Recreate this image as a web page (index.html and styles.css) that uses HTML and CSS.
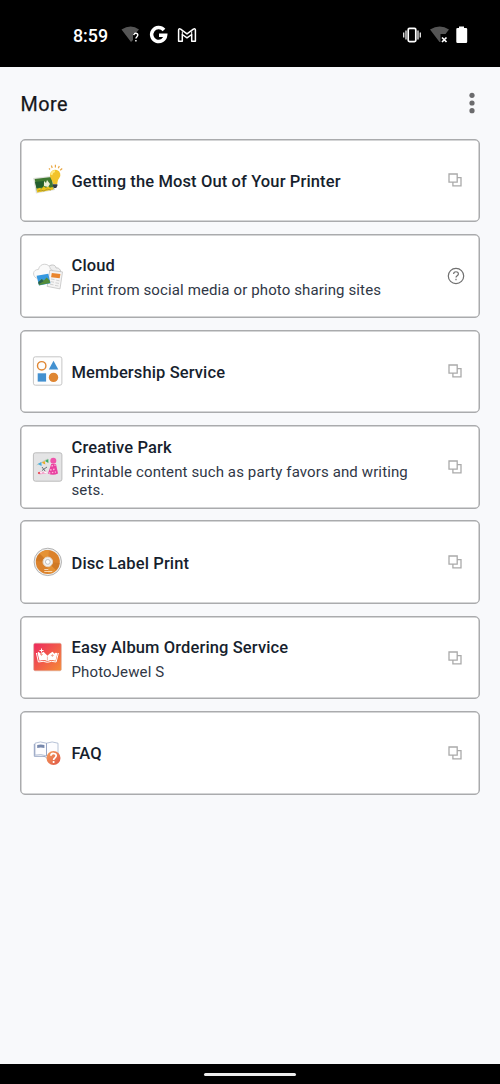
FILE: index.html
```html
<!DOCTYPE html>
<html lang="en">
<head>
<meta charset="utf-8">
<title>More</title>
<link rel="stylesheet" href="styles.css">
</head>
<body>
<svg class="defs" width="0" height="0">
  <symbol id="external" viewBox="0 0 14 14"><path d="M9.5 4.7H13v8.2H4.9V9.4M1 1h8.2v8.2H1z" fill="none" stroke="#aaa" stroke-width="1.3"/></symbol>
</svg>
<header class="status">
  <span class="clock">8:59</span>
  <svg class="status-left" width="80" height="24" viewBox="0 0 80 24">
    <path d="M1.5 5.5Q11-.5 19 5.5L16 9h-3v7l-2 2z" fill="#555"/>
    <path d="M13.8 11.1q.1-1.9 2-1.9 2 0 2 1.8c0 1.5-1.9 1.8-1.9 3.5m0 1.5v1.5" fill="none" stroke="#fff" stroke-width="1.4"/>
    <path d="M44 6A7 7 0 1 0 45.6 11.3H39" fill="none" stroke="#fff" stroke-width="3.5"/>
    <path d="M58.6 17.3V6q0-1.8 2-.8l6.4 4.7 6.4-4.7q2-1 2 .8v11.3h-3.7v-6.8L67 13.8l-4.7-3.3v6.8z" fill="none" stroke="#fff" stroke-width="1.5" stroke-linejoin="round"/>
    <path d="M62.3 10.5V7.4M71.7 10.5V7.4" stroke="#fff"/>
  </svg>
  <svg class="status-right" width="66" height="24" viewBox="0 0 66 24">
    <path d="M6.2 5.7q0-1.3 1.3-1.3h5q1.3 0 1.3 1.3v10.6q0 1.3-1.3 1.3h-5q-1.3 0-1.3-1.3z" fill="none" stroke="#fff" stroke-width="1.7"/>
    <path d="M4 6.5v9M16 6.5v9M1.7 8.5v5M18.3 8.5v5" stroke="#ddd" stroke-width="1.4"/>
    <path d="M28 5.5Q38-.5 47 5.5L43.5 10h-5v8h-1z" fill="#555"/>
    <path d="m40 13.5 4.5 4.5m0-4.5L40 18" stroke="#fff" stroke-width="1.7"/>
    <path d="M57 2.5h5v1.4h2q1.2 0 1.2 1.2v12.6q0 1.4-1.2 1.4h-8.5q-1.2 0-1.2-1.4V5.1q0-1.2 1.2-1.2H57z" fill="#fff"/>
  </svg>
</header>
<main class="screen">
  <div class="toolbar">
    <h1 class="heading">More</h1>
    <svg class="overflow" width="6" height="22" viewBox="0 0 6 22" fill="#6b6b6d"><circle cx="3" cy="3.3" r="2.6"/><circle cx="3" cy="11" r="2.6"/><circle cx="3" cy="18.7" r="2.6"/></svg>
  </div>
  <div class="cards">
    <section class="card">
      <svg class="icon" viewBox="0 0 32 32">
        <path d="M1.2 14 21 11.7l2 14.3-19 3.5z" fill="#dedfd9"/>
        <path d="m2.7 15 17-2.1 1.8 12-16.4 3z" fill="#3f7931"/>
        <path d="m3 18 9-1-1 6-6.5 1z" fill="#235d2d"/>
        <path d="m4.7 24.7 3-.7 2 .6 2-2.4 2 1.6 3-1.6 1 1.6 3-.7.8 2.4-16.4 3z" fill="#ecc31d"/>
        <path d="m6 27 3-1 3 1 3-2 4 1" fill="none" stroke="#b49c20"/>
        <path d="m12 17 2 2 1-3 3 4-2 3-4-1z" fill="#ecefd6"/>
        <path d="M18 11a5.2 5.2 0 1 1 9.2 3.3c-1.6 2-1.4 3-2 5.7h-4c0-3-3.2-5-3.2-9z" fill="#f2c32b"/>
        <path d="M19.4 11q.5-3.3 3.5-4" fill="none" stroke="#ffe981" stroke-width="1.8"/>
        <path d="M20.8 20.2h4.6v1.5l-1.2 2.4h-2.4l-1-2.2z" fill="#343b43"/>
        <path d="m18 5.5-1-1.2M20.2 4l-.8-2.5M23.4 3.5V.8M26.3 4.3l1-2.2M28.2 6.3l2-1.8" stroke="#eaa743" stroke-width="1.2"/>
      </svg>
      <div class="copy single"><h2 class="title">Getting the Most Out of Your Printer</h2></div>
      <svg class="action"><use href="#external"/></svg>
    </section>
    <section class="card">
      <svg class="icon" viewBox="0 0 32 32">
        <path d="M16 8c1-4 8-4 8 0 5-1 7 7 1 8H15z" fill="#eee" stroke="#c5c5c5"/>
        <path d="M4 18C0 15 1 9.5 6.4 9.5 8 2 18 3 18.4 9.2 23 10 23 17 18 18z" fill="#fafafa" stroke="#c8c8c8" stroke-width=".8"/>
        <path d="m17.8 10.4 12.7 1.5-2.5 17-12.8-2.5z" fill="#f5f4f4" stroke="#bbb" stroke-width=".7"/>
        <path d="m19.8 13 8.6 1.1-.7 4.2-8.6-1.1z" fill="#e9852d"/>
        <path d="m19 19 3.5.6m-4 2 3.5.6m-4 2 3.5.6m2.7-4.6 3.3.6m-4 2 3.5.6m-4 2 3.5.6" stroke="#d2d2d2" stroke-width="1"/>
        <path d="m4.6 15.8 11.7-2.1 2.2 9.5L7 25.5z" fill="#3698df"/>
        <path d="m6.4 22 3.5-3 2 1.5 2.7-3 3 3 .6 2.5L7 25.3z" fill="#538c3a"/>
        <path d="m6.3 22.2 3.4-3 1.8 2-4.8 3z" fill="#285e50"/>
      </svg>
      <div class="copy"><h2 class="title">Cloud</h2><p class="detail">Print from social media or photo sharing sites</p></div>
      <svg class="help" viewBox="0 0 18 18"><circle cx="9" cy="9" r="7.7" fill="none" stroke="#707070" stroke-width="1.2"/><path d="M6.6 7c0-3 4.8-3 4.8 0 0 1.7-2.4 1.8-2.4 3.5m0 1.3v1.4" fill="none" stroke="#707070" stroke-width="1.2"/></svg>
    </section>
    <section class="card">
      <svg class="icon raised" viewBox="0 0 32 32">
        <rect x="1.4" y="1.8" width="28.5" height="28.4" rx="2" fill="#fdfdfd" stroke="#c6c6c6"/>
        <circle cx="9.7" cy="10.8" r="4.2" fill="none" stroke="#df8632" stroke-width="1.4"/>
        <path d="m21.5 5.7 4.8 8.9h-9.5z" fill="#4290d0"/>
        <path d="M5.7 18.3h8.4v8.3H5.7z" fill="#4290d0"/><circle cx="21.5" cy="22.4" r="4.7" fill="#df8632"/>
      </svg>
      <div class="copy single"><h2 class="title">Membership Service</h2></div>
      <svg class="action"><use href="#external"/></svg>
    </section>
    <section class="card">
      <svg class="icon" viewBox="0 0 32 32">
        <rect x="1.4" y="1.8" width="28.5" height="28.4" rx="2" fill="#e4e4e5" stroke="#bcbcbc"/>
        <path d="m4.7 14 11-6" stroke="#b8c2ac" stroke-width=".7"/>
        <path d="m5.7 13 3.7-2 .2 4z" fill="#46aee0"/><path d="m9.7 11.7 3-1.6.6 3.3z" fill="#eaa929"/><path d="m13 10 3.3-2 .1 4z" fill="#36aa61"/>
        <path d="M16 22.5 19.2 13h4.8l2 9.5q-5 2.5-10 0z" fill="#e840a0"/><circle cx="21.3" cy="9.7" r="3" fill="#ef54ab"/>
        <path d="m19.5 15 4-1m-5.4 5 6-1m-7.2 4 7-1" stroke="#ffb1d8" stroke-width="1.3" stroke-dasharray="1.5 1.5"/>
        <path d="m10 19.5 5-3.5m-5 0 3 4" stroke="#687178" stroke-width="1"/>
        <path d="m5.5 22 3-2 2 1.2 3-1 2 2-8 1.3z" fill="#f4a3cb"/><path d="m8 21 2 1m2-1 3 1" stroke="#fff"/><circle cx="7" cy="22" r="1" fill="#e63f42"/>
      </svg>
      <div class="copy"><h2 class="title">Creative Park</h2><p class="detail">Printable content such as party favors and writing<br>sets.</p></div>
      <svg class="action"><use href="#external"/></svg>
    </section>
    <section class="card">
      <svg class="icon" viewBox="0 0 32 32">
        <circle cx="15.8" cy="15.9" r="13.7" fill="#eee" stroke="#aaa" stroke-width=".9"/>
        <circle cx="15.8" cy="15.9" r="12" fill="#db822c"/>
        <path d="M15.8 15.9 7.5 7.5A12 12 0 0 1 17 4zM15.8 15.9 24 24a12 12 0 0 1-8 3.5z" fill="#e59235"/>
        <path d="M15.8 15.9 4 15a12 12 0 0 1 3.5-7.5zM15.8 15.9l11.8 1A12 12 0 0 1 24 24z" fill="#d07925"/>
        <circle cx="15.8" cy="15.9" r="4.8" fill="#f2f2f2" stroke="#e4d5c5"/><circle cx="15.8" cy="15.9" r="2.4" fill="#fff" stroke="#bbb" stroke-width=".9"/>
        <path d="M12.3 23.5h4M12.3 25.5h8" stroke="#fbe0bf" stroke-width=".9"/>
      </svg>
      <div class="copy single"><h2 class="title">Disc Label Print</h2></div>
      <svg class="action"><use href="#external"/></svg>
    </section>
    <section class="card">
      <svg class="icon raised" viewBox="0 0 32 32">
        <defs><linearGradient id="album" x2="1" y2="1"><stop stop-color="#ed285f"/><stop offset="1" stop-color="#f68d35"/></linearGradient></defs>
        <rect x="1.7" y="2.2" width="27.6" height="27.6" rx="1.5" fill="url(#album)" stroke="#d9aa9b" stroke-width=".6"/>
        <path d="m5.5 12 2 7.8q5-1.7 8 .5 4-2.2 8-.5l2-7.8-2-.2-1 1-2-2-3 2-2 2-2-2-2-2-3 2-2-2z" fill="#fff"/>
        <path d="m4.4 12 2 9q5-1.5 9 .3 4-1.8 8.7-.3L26.4 12" fill="none" stroke="#fff" stroke-width="1"/>
        <path d="M9.5 7.5v4M7.5 9.5h4" stroke="#fff"/><path d="M9.5 12v3M8 13.5h3M20.4 13v3m-1.5-1.5h3M15.4 15.5v4" stroke="#ee9581" stroke-width=".7"/>
      </svg>
      <div class="copy"><h2 class="title">Easy Album Ordering Service</h2><p class="detail">PhotoJewel S</p></div>
      <svg class="action"><use href="#external"/></svg>
    </section>
    <section class="card">
      <svg class="icon" viewBox="0 0 32 32">
        <defs><linearGradient id="question" x2="1" y2="1"><stop stop-color="#f5a05d"/><stop offset="1" stop-color="#df5546"/></linearGradient></defs>
        <path d="M14.5 6.2Q8 3.7 3 6.2v11.9q6-1.5 11.5.8 5-2.3 11.5-.8V6.2Q20 3.7 14.5 6.2z" fill="#fdfdff" stroke="#a5b2cb" stroke-width=".8"/>
        <path d="M14.5 6.2v12.7M2.3 7v12.3h8.7q2.5 0 3.5 1.5 1-1.5 3-1.5" fill="none" stroke="#7d8fb5" stroke-width=".8"/>
        <path d="M5.2 8q3.6-1 7.2 0v3q-3.6-.8-7.2 0z" fill="#7889ad"/>
        <circle cx="21.5" cy="21" r="7" fill="url(#question)"/>
        <path d="M18.9 18.8c.1-3.2 5.3-3 5.3 0 0 2-2.6 2-2.6 4.1m0 1.2v1.8" fill="none" stroke="#fff" stroke-width="1.7"/>
      </svg>
      <div class="copy single"><h2 class="title">FAQ</h2></div>
      <svg class="action"><use href="#external"/></svg>
    </section>
  </div>
</main>
<footer class="navbar"><div class="handle"></div></footer>
</body>
</html>
```
FILE: styles.css
```css
* { box-sizing: border-box; }
body { margin: 0; width: 500px; height: 1084px; display: flex; flex-direction: column; background: #f8f9fb; color: #171f2e; font-family: Roboto, sans-serif; overflow: hidden; }
.defs { display: none; }
.status { height: 67px; flex: none; display: flex; align-items: flex-start; padding: 24px 32px 0 73px; background: #000; color: #fff; }
.clock { width: 47px; font-size: 17.8px; line-height: 24px; font-weight: 500; white-space: nowrap; }
.status-left { flex: none; }
.status-right { margin-left: auto; flex: none; }
.screen { flex: 1; padding: 0 20px; }
.toolbar { height: 71.7px; display: flex; justify-content: space-between; align-items: center; padding-right: 5px; }
.heading { margin: 3px 0 0 .5px; font-size: 19.8px; font-weight: 400; letter-spacing: .5px; color: #15161a; -webkit-text-stroke: .25px #15161a; }
.cards { display: flex; flex-direction: column; gap: 11.95px; }
.card { height: 83.5px; display: flex; align-items: center; padding: 0 16px 0 11px; border: 1px solid #aaabad; border-radius: 5px; background: #fff; box-shadow: inset 0 0 0 .5px #aaabad; }
.icon { width: 32px; height: 32px; flex: none; }
.raised { margin-top: -1px; }
.copy { flex: 1; min-width: 0; padding-left: 7.5px; padding-top: 2.2px; }
.single { padding-top: 2.8px; }
.title { margin: 0; font-size: 16.5px; line-height: 22px; font-weight: 500; letter-spacing: .12px; white-space: nowrap; }
.detail { margin: 4px 0 0; font-size: 15px; line-height: 18px; font-weight: 400; letter-spacing: .12px; color: #303746; white-space: nowrap; }
.action { width: 14px; height: 14px; flex: none; margin: 0 1px 0 0; }
.help { width: 18px; height: 18px; flex: none; margin-right: -2px; }
.navbar { height: 20px; flex: none; display: flex; justify-content: center; align-items: center; background: #000; }
.handle { width: 92px; height: 3px; border-radius: 2px; background: #eee; margin-top: 1px; }
```
